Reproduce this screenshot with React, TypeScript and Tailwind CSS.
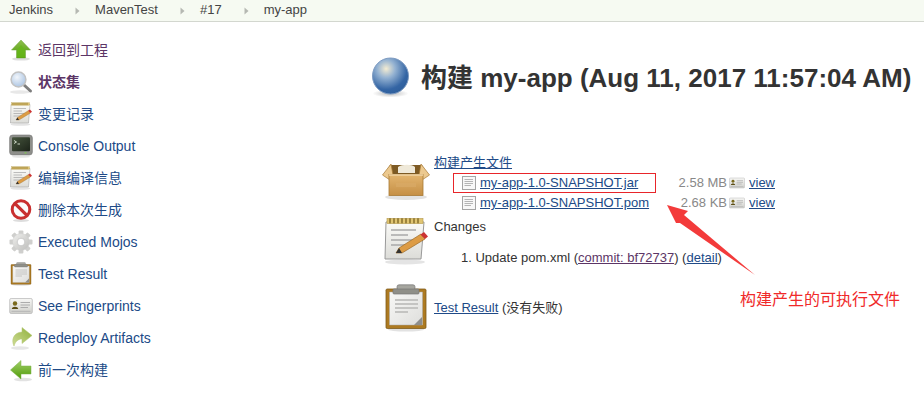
import React from "react";

const FONT = '"Liberation Sans", "Noto Sans CJK SC", sans-serif';

function ArrowUp() {
  return (
    <svg width="24" height="24" viewBox="0 0 24 24">
      <defs>
        <linearGradient id="au" x1="0" y1="0" x2="0" y2="1">
          <stop offset="0" stopColor="#8fc04e" />
          <stop offset="1" stopColor="#4e9a06" />
        </linearGradient>
      </defs>
      <ellipse cx="12" cy="21" rx="9" ry="1.6" fill="#ddd" />
      <path d="M12 2 L21.5 12 H16.5 V20 H7.5 V12 H2.5 Z" fill="url(#au)" stroke="#6fa53a" strokeWidth="0.5" />
      <path d="M12 7 L16 12 V19.5 H8 V12 Z" fill="#67b81a" opacity="0.8" />
    </svg>
  );
}

function ArrowLeft() {
  return (
    <svg width="24" height="24" viewBox="0 0 24 24">
      <defs>
        <linearGradient id="al" x1="0" y1="0" x2="0" y2="1">
          <stop offset="0" stopColor="#a3d06c" />
          <stop offset="1" stopColor="#4e9a06" />
        </linearGradient>
      </defs>
      <ellipse cx="14" cy="21.5" rx="9" ry="1.8" fill="#e2e2e2" />
      <path d="M1.5 12 L12 2.5 V8 H22 V16 H12 V21 Z" fill="url(#al)" stroke="#7bb046" strokeWidth="0.5" />
    </svg>
  );
}

function Search() {
  return (
    <svg width="24" height="24" viewBox="0 0 24 24">
      <defs>
        <radialGradient id="se" cx="0.4" cy="0.35" r="0.7">
          <stop offset="0" stopColor="#f2f6fb" />
          <stop offset="1" stopColor="#a9c3e2" />
        </radialGradient>
      </defs>
      <ellipse cx="11" cy="22" rx="10" ry="1.8" fill="#e8e8e8" />
      <path d="M15 15 L21.5 21" stroke="#7d7d7d" strokeWidth="3" strokeLinecap="round" />
      <circle cx="9.5" cy="9.5" r="7.4" fill="url(#se)" stroke="#c2c2c2" strokeWidth="1.5" />
    </svg>
  );
}

function Notepad({ size = 24, id }: { size?: number; id: string }) {
  return (
    <svg width={size} height={size} viewBox="0 0 48 48">
      <defs>
        <linearGradient id={id} x1="0" y1="0" x2="0" y2="1">
          <stop offset="0" stopColor="#fbfbf8" />
          <stop offset="1" stopColor="#dcdcd8" />
        </linearGradient>
      </defs>
      <ellipse cx="23" cy="45" rx="20" ry="2.5" fill="#e4e4e4" />
      <path d="M4 5 H42 L39 42 H3 Z" fill={`url(#${id})`} stroke="#999" strokeWidth="1" />
      <rect x="5" y="1.5" width="36" height="5" fill="#e0c572" stroke="#b39748" strokeWidth="0.6" />
      {[8, 12, 16, 20, 24, 28, 32, 36].map((x) => (
        <rect key={x} x={x - 0.8} y="1" width="1.6" height="5.5" rx="0.8" fill="#8c7430" />
      ))}
      {[13, 18, 23, 28].map((y, i) => (
        <path key={y} d={`M9 ${y} H${i % 2 ? 26 : 34}`} stroke="#a8a8a8" strokeWidth="1.5" />
      ))}
      <path d="M14 36 L17 31 L39 17 L43 22 L20 36 Z" fill="#dd9c45" stroke="#9b6a26" strokeWidth="0.7" />
      <path d="M14 36 L17 31 L20 36 Z" fill="#333" />
      <path d="M38.5 17.5 L42 15 L46 19.5 L43 22 Z" fill="#cc3333" />
    </svg>
  );
}

function Terminal() {
  return (
    <svg width="24" height="24" viewBox="0 0 24 24">
      <defs>
        <linearGradient id="tm" x1="0" y1="0" x2="1" y2="1">
          <stop offset="0" stopColor="#46553d" />
          <stop offset="1" stopColor="#1c2319" />
        </linearGradient>
      </defs>
      <rect x="0.6" y="1" width="22.8" height="20" rx="3" fill="#8e8f8b" stroke="#777" strokeWidth="0.6" />
      <rect x="3" y="3.2" width="18" height="14" rx="1" fill="url(#tm)" />
      <path d="M5 6.5 L7.5 8 L5 9.5" fill="none" stroke="#dfe8d8" strokeWidth="0.9" />
      <path d="M8.5 10 H11" stroke="#dfe8d8" strokeWidth="0.9" />
      <rect x="15.5" y="18.3" width="2" height="1.2" fill="#7ec850" />
      <ellipse cx="12" cy="22.8" rx="9" ry="1" fill="#e4e4e4" />
    </svg>
  );
}

function NoEntry() {
  return (
    <svg width="24" height="24" viewBox="0 0 24 24">
      <ellipse cx="12" cy="22.5" rx="8" ry="1.4" fill="#ddd" />
      <circle cx="12" cy="11.5" r="8.8" fill="#fbfbfb" stroke="#c92f2f" strokeWidth="3" />
      <path d="M5.8 5.3 L18.2 17.7" stroke="#c92f2f" strokeWidth="3.2" />
    </svg>
  );
}

function Gear() {
  const teeth = [0, 45, 90, 135, 180, 225, 270, 315];
  return (
    <svg width="24" height="24" viewBox="0 0 24 24">
      <defs>
        <linearGradient id="gr" x1="0" y1="0" x2="1" y2="1">
          <stop offset="0" stopColor="#f0f0ee" />
          <stop offset="1" stopColor="#bdbdbb" />
        </linearGradient>
      </defs>
      {teeth.map((a) => (
        <rect key={a} x="9.6" y="0.5" width="4.8" height="6" rx="1" fill="#cfcfcd" transform={`rotate(${a} 12 12)`} />
      ))}
      <circle cx="12" cy="12" r="8.4" fill="url(#gr)" stroke="#ccc" strokeWidth="0.4" />
      <circle cx="12" cy="12" r="3.8" fill="#fff" stroke="#b5b5b5" strokeWidth="0.6" />
    </svg>
  );
}

function Clipboard({ size = 24, id }: { size?: number; id: string }) {
  return (
    <svg width={size} height={size} viewBox="0 0 48 48">
      <defs>
        <linearGradient id={id} x1="0" y1="0" x2="1" y2="1">
          <stop offset="0" stopColor="#f8f8f6" />
          <stop offset="1" stopColor="#dededc" />
        </linearGradient>
      </defs>
      <ellipse cx="24" cy="45.5" rx="18" ry="2" fill="#e2e2e2" />
      <rect x="4" y="5" width="40" height="39.5" rx="1.2" fill="#ad7a21" stroke="#7d5a1c" strokeWidth="0.8" />
      <path d="M7.5 8 H40.5 V41 H7.5 Z" fill={`url(#${id})`} stroke="#aaa" strokeWidth="0.5" />
      <rect x="15" y="0.8" width="18" height="5" rx="2" fill="#a6a69f" stroke="#777" strokeWidth="0.7" />
      <rect x="11" y="5" width="26" height="5" rx="1" fill="#8f8f88" stroke="#777" strokeWidth="0.7" />
      {[16, 20, 24, 28].map((y, i) => (
        <path key={y} d={`M13 ${y} H${i === 3 ? 26 : 36}`} stroke="#c4c4c2" strokeWidth="2" />
      ))}
      <path d="M32 41 L40 33 V41 Z" fill="#8e8e8c" />
    </svg>
  );
}

function Card({ id, size = 24 }: { id: string; size?: number }) {
  return (
    <svg width={size} height={size} viewBox="0 0 24 24" className="block">
      <defs>
        <linearGradient id={id} x1="0" y1="0" x2="0" y2="1">
          <stop offset="0" stopColor="#f7f7f5" />
          <stop offset="1" stopColor="#cfcfcb" />
        </linearGradient>
      </defs>
      <rect x="0.7" y="4.5" width="22.6" height="15" rx="1.4" fill={`url(#${id})`} stroke="#b5b5b5" strokeWidth="0.7" />
      <circle cx="6" cy="9.5" r="2.2" fill="#7a6a1e" />
      <path d="M2.8 15 C3 12 9 12 9.2 15 Z" fill="#5b4c14" />
      <path d="M11.5 8.5 H21 M11.5 11 H21 M11.5 13.5 H19" stroke="#a5a5a5" strokeWidth="0.9" />
      <path d="M2.5 17.3 H21.5" stroke="#b5b5b5" strokeWidth="1" />
    </svg>
  );
}

function Redeploy() {
  return (
    <svg width="24" height="24" viewBox="0 0 24 24">
      <defs>
        <linearGradient id="rd" x1="0" y1="1" x2="1" y2="0">
          <stop offset="0" stopColor="#cfdc96" />
          <stop offset="1" stopColor="#8fb03c" />
        </linearGradient>
      </defs>
      <ellipse cx="11" cy="22" rx="9" ry="1.8" fill="#e6e6e6" />
      <path d="M13 1.5 L23 9.5 L13 17.5 V13 C9.5 13 6.5 15 5 20 C2 14 4.5 6.5 13 6 Z" fill="url(#rd)" stroke="#b0c46e" strokeWidth="0.5" />
    </svg>
  );
}

function Ball() {
  return (
    <svg width="40" height="42" viewBox="0 0 40 42">
      <defs>
        <radialGradient id="bl" cx="0.38" cy="0.3" r="0.72">
          <stop offset="0" stopColor="#f4ecd2" />
          <stop offset="0.35" stopColor="#94b2d2" />
          <stop offset="0.8" stopColor="#3465a4" />
          <stop offset="1" stopColor="#2f5f9c" />
        </radialGradient>
        <radialGradient id="bs">
          <stop offset="0" stopColor="#bbb" />
          <stop offset="1" stopColor="#fff" />
        </radialGradient>
      </defs>
      <ellipse cx="18.5" cy="36.5" rx="18" ry="4" fill="url(#bs)" />
      <circle cx="18.5" cy="19" r="18" fill="url(#bl)" stroke="#7f9cc2" strokeWidth="1" />
    </svg>
  );
}

function Package() {
  return (
    <svg width="48" height="40" viewBox="0 0 48 40" className="block">
      <defs>
        <linearGradient id="pk" x1="0" y1="0" x2="0" y2="1">
          <stop offset="0" stopColor="#e3b56f" />
          <stop offset="1" stopColor="#c58f45" />
        </linearGradient>
      </defs>
      <ellipse cx="24" cy="36" rx="21" ry="3" fill="#e2e2e2" />
      <path d="M8 4 H40 L45 13 H3 Z" fill="#7d5a24" />
      <path d="M16 6 C20 3 30 3 33 6 V12 H16 Z" fill="#efe9d9" />
      <path d="M9 3 L0.5 14 L8 19 L11 14 Z" fill="#ecc98f" stroke="#a87a35" strokeWidth="0.7" />
      <path d="M39 3 L47.5 14 L40 19 L37 14 Z" fill="#ecc98f" stroke="#a87a35" strokeWidth="0.7" />
      <rect x="7" y="13.5" width="34" height="21" fill="url(#pk)" stroke="#a87a35" strokeWidth="0.8" />
      <path d="M7 14 H41" stroke="#f0d4a4" strokeWidth="1.4" />
      <rect x="14" y="22" width="20" height="4" fill="#d9a967" opacity="0.7" />
    </svg>
  );
}

function FileIcon() {
  return (
    <svg width="16" height="16" viewBox="0 0 16 16" className="block shrink-0">
      <rect x="1.5" y="1.5" width="13" height="13" fill="#f8f8f8" stroke="#a5a5a5" strokeWidth="1" />
      <path d="M3.5 4.5 H12 M3.5 6.5 H12 M3.5 8.5 H12 M3.5 10.5 H10" stroke="#b5b5b5" strokeWidth="1" />
    </svg>
  );
}

function Crumb({ children, last }: { children: React.ReactNode; last?: boolean }) {
  return (
    <>
      <span className="text-[13px] text-[#444]">{children}</span>
      {!last && (
        <svg width="5" height="8" viewBox="0 0 5 8" className="ml-[22px] mr-[15px] mt-[2px]">
          <path d="M0.5 0.5 L4.5 4 L0.5 7.5 Z" fill="#b5b8b2" />
        </svg>
      )}
    </>
  );
}

const nav: { icon: React.ReactNode; label: string; cls: string }[] = [
  { icon: <ArrowUp />, label: "返回到工程", cls: "text-[#5c3566]" },
  { icon: <Search />, label: "状态集", cls: "text-[#5c3566] font-bold" },
  { icon: <Notepad id="n1" />, label: "变更记录", cls: "text-[#204a87]" },
  { icon: <Terminal />, label: "Console Output", cls: "text-[#204a87]" },
  { icon: <Notepad id="n2" />, label: "编辑编译信息", cls: "text-[#204a87]" },
  { icon: <NoEntry />, label: "删除本次生成", cls: "text-[#204a87]" },
  { icon: <Gear />, label: "Executed Mojos", cls: "text-[#204a87]" },
  { icon: <Clipboard id="c1" />, label: "Test Result", cls: "text-[#204a87]" },
  { icon: <Card id="f1" />, label: "See Fingerprints", cls: "text-[#204a87]" },
  { icon: <Redeploy />, label: "Redeploy Artifacts", cls: "text-[#204a87]" },
  { icon: <ArrowLeft />, label: "前一次构建", cls: "text-[#204a87]" },
];

function ArtifactRow({ name, size, id }: { name: string; size: string; id: string }) {
  return (
    <div className="flex h-[20px] items-center whitespace-nowrap text-[13px]">
      <div className="flex w-[212px] items-center pl-[27px]">
        <FileIcon />
        <a className="ml-[3px] text-[#204a87] underline">{name}</a>
      </div>
      <span className="w-[81px] text-right text-[#888]">{size}</span>
      <span className="ml-[2px]"><Card id={id} size={16} /></span>
      <a className="ml-[4px] text-[#204a87] underline">view</a>
    </div>
  );
}

export default function App() {
  return (
    <div className="relative h-[409px] w-[924px] overflow-hidden bg-white text-[#333]" style={{ fontFamily: FONT }}>
      <div className="flex h-[22px] items-center border-b border-[#d3d7cf] bg-[#f6faf2] pb-[2px] pl-[9px]">
        <Crumb>Jenkins</Crumb>
        <Crumb>MavenTest</Crumb>
        <Crumb>#17</Crumb>
        <Crumb last>my-app</Crumb>
      </div>

      <div className="flex">
        <nav className="flex w-[372px] shrink-0 flex-col pl-[9px] pt-[12px]">
          {nav.map((n) => (
            <div key={n.label} className="flex h-[32px] items-center gap-[5px]">
              <span className="flex h-[24px] w-[24px] shrink-0 items-center justify-center">{n.icon}</span>
              <span className={`text-[14px] ${n.cls}`}>{n.label}</span>
            </div>
          ))}
        </nav>

        <main className="flex-1">
          <div className="mt-[35px] flex h-[42px] items-center whitespace-nowrap">
            <Ball />
            <h1 className="ml-[9px] text-[26px] font-bold text-[#333]">构建 my-app (Aug 11, 2017 11:57:04 AM)</h1>
          </div>

          <div className="ml-[10px] mt-[54px] flex">
            <div className="mt-[8px] w-[52px] shrink-0"><Package /></div>
            <div>
              <a className="block h-[20px] text-[13px] leading-[20px] text-[#204a87] underline">构建产生文件</a>
              <ArtifactRow name="my-app-1.0-SNAPSHOT.jar" size="2.58 MB" id="m1" />
              <ArtifactRow name="my-app-1.0-SNAPSHOT.pom" size="2.68 KB" id="m2" />
            </div>
          </div>

          <div className="ml-[10px] mt-[4px] flex">
            <div className="w-[52px] shrink-0"><Notepad size={48} id="n3" /></div>
            <div className="text-[13px]">
              <div className="h-[20px] leading-[20px]">Changes</div>
              <div className="ml-[27px] mt-[11px] leading-[20px]">
                1. Update pom.xml (<a className="text-[#5c3566] underline">commit: bf72737</a>) (<a className="text-[#204a87] underline">detail</a>)
              </div>
            </div>
          </div>

          <div className="ml-[10px] mt-[16px] flex items-center">
            <div className="w-[52px] shrink-0"><Clipboard size={48} id="c2" /></div>
            <div className="text-[13px]">
              <a className="text-[#204a87] underline">Test Result</a> (没有失败)
            </div>
          </div>
        </main>
      </div>

      <div className="absolute left-[453px] top-[173px] h-[20px] w-[203px] border border-[#e8252a]" />
      <svg className="absolute left-[660px] top-[200px]" width="100" height="80" viewBox="0 0 100 80">
        <path d="M7 5 L28 11 L24 15 L95 75 L20 23 L16 23 Z" fill="#f33b3b" />
      </svg>
      <div className="absolute left-[740px] top-[288px] text-[16px] text-[#f02a2a]">构建产生的可执行文件</div>
    </div>
  );
}
